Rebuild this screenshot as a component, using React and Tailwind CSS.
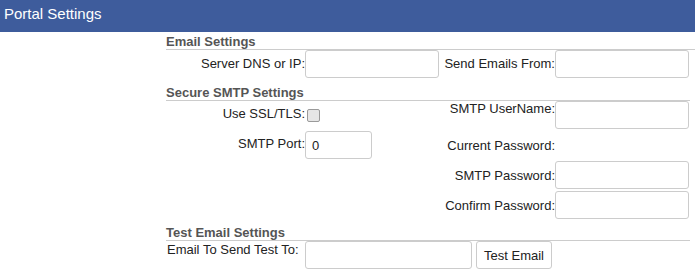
import React from "react";

function Title({ children, className = "" }) {
  return (
    <div
      className={
        "font-bold text-[#555] leading-[14px] border-b border-[#cccccc] " +
        className
      }
    >
      {children}
    </div>
  );
}

function Field({ className = "", value = "" }) {
  return (
    <input
      type="text"
      defaultValue={value}
      className={
        "h-[28px] bg-white border border-[#cccccc] rounded-[3px] px-[6px] text-[13px] text-[#222] outline-none " +
        className
      }
    />
  );
}

export default function App() {
  return (
    <div className="w-[695px] h-[275px] overflow-hidden bg-white font-['Liberation_Sans',Arial,sans-serif] text-[13px] leading-[15px] text-[#222]">
      <div className="h-[32px] bg-[#3e5c9c] pl-[4px] pt-[5px] text-[15px] leading-[18px] text-white">
        Portal Settings
      </div>
      <div className="ml-[166px] flex flex-col">
        <Title className="mt-[3px]">Email Settings</Title>
        <div className="grid grid-cols-[139px_134px_116px_134px] items-center h-[28px]">
          <div className="text-right pb-[2px]">Server DNS or IP:</div>
          <Field className="w-[134px]" />
          <div className="text-right pb-[2px]">Send Emails From:</div>
          <Field className="w-[134px]" />
        </div>

        <Title className="mt-[8px] w-[524px]">Secure SMTP Settings</Title>
        <div className="grid grid-cols-[139px_134px_116px_134px] grid-rows-[28px_28px_28px_28px] gap-y-[2px] items-center">
          <div className="text-right pb-[4px]">Use SSL/TLS:</div>
          <div className="flex items-center pl-[2px]">
            <span className="block w-[13px] h-[13px] rounded-[2px] border border-[#9a9a9a] bg-[#e6e6e6]" />
          </div>
          <div className="text-right self-start">SMTP UserName:</div>
          <Field className="w-[134px]" />

          <div className="text-right pb-[4px]">SMTP Port:</div>
          <Field className="w-[67px]" value="0" />
          <div className="text-right">Current Password:</div>
          <div />

          <div />
          <div />
          <div className="text-right">SMTP Password:</div>
          <Field className="w-[134px]" />

          <div />
          <div />
          <div className="text-right">Confirm Password:</div>
          <Field className="w-[134px]" />
        </div>

        <Title className="mt-[7px] w-[524px]">Test Email Settings</Title>
        <div className="flex items-start">
          <div className="w-[139px] pl-[1px] pt-[1px]">Email To Send Test To:</div>
          <Field className="w-[167px]" />
          <button className="ml-[4px] h-[28px] w-[76px] bg-white border border-[#cccccc] rounded-[3px] text-[13px] text-[#222]">
            Test Email
          </button>
        </div>
      </div>
    </div>
  );
}
